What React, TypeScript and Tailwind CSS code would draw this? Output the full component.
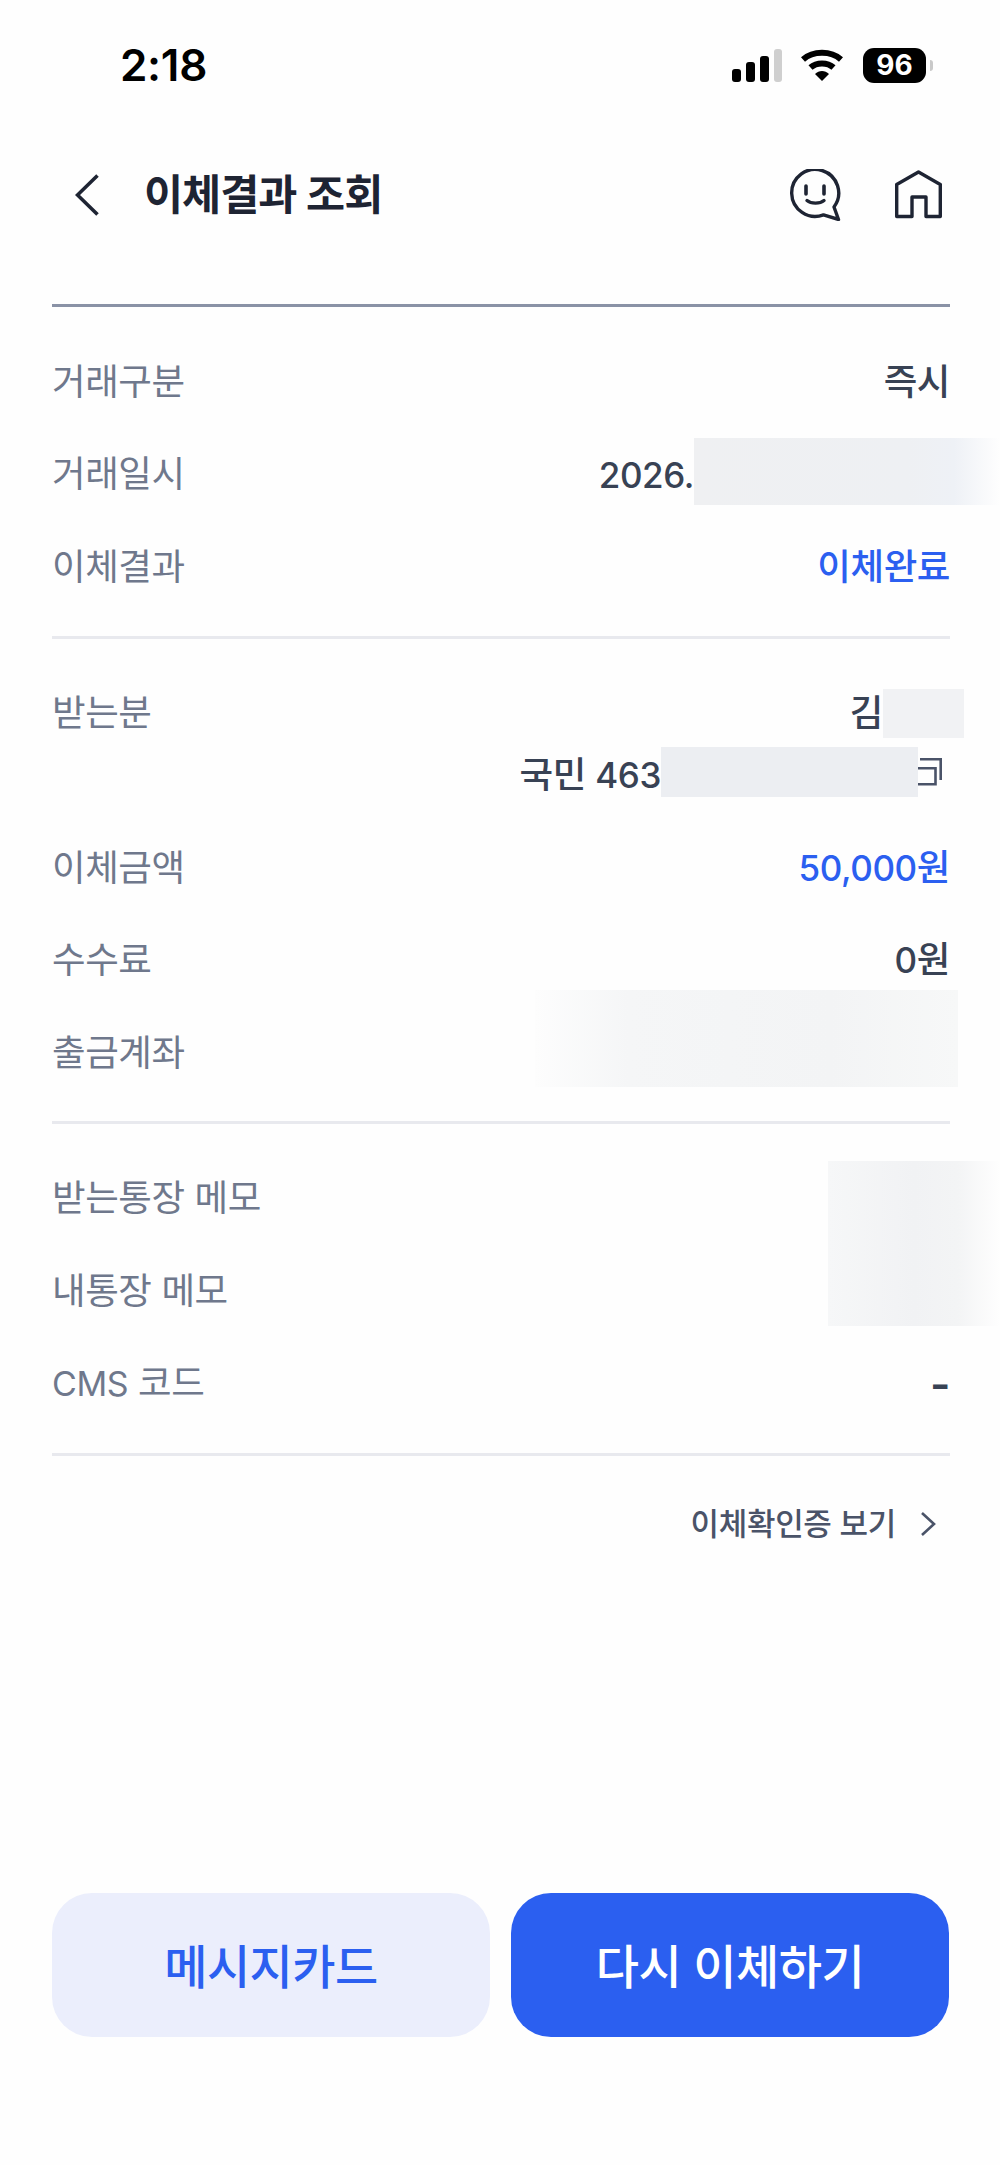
import * as React from "react";

const font = { fontFamily: 'Inter, "Noto Sans CJK KR", sans-serif' };

function Row({ label, children, className = "" }: { label: React.ReactNode; children?: React.ReactNode; className?: string }) {
  return (
    <div className={`flex h-[92.5px] items-center justify-between text-[36.5px] tracking-[-0.4px] ${className}`}>
      <span className="text-[#6f788c]">{label}</span>
      {children}
    </div>
  );
}

function Value({ children, blue }: { children: React.ReactNode; blue?: boolean }) {
  return <span className={`font-medium ${blue ? "text-[#2b5ff0]" : "text-[#384254]"}`}>{children}</span>;
}

function Divider() {
  return <div className="h-[3px] bg-[#e8e9ee]" />;
}

export default function App() {
  return (
    <div className="relative h-[2165px] w-[1000px] overflow-hidden bg-[#fefefe]" style={font}>
      {/* status bar */}
      <div className="flex h-[132px] items-center justify-between pb-[2px] pl-[120px] pr-[67px]">
        <span className="text-[44px] font-semibold tracking-[-0.3px] text-black">2:18</span>
        <div className="flex items-center">
          <svg width="50" height="33" viewBox="0 0 50 33">
            <rect x="0" y="20" width="9" height="13" rx="3" fill="#000" />
            <rect x="14" y="13" width="9" height="20" rx="3" fill="#000" />
            <rect x="28" y="7" width="9" height="26" rx="3" fill="#000" />
            <rect x="42" y="0" width="8" height="33" rx="3" fill="#cfcfcf" />
          </svg>
          <svg className="ml-[19px]" width="42" height="32" viewBox="0 0 42 32" fill="none" stroke="#000" strokeWidth="6">
            <path d="M2 10.500C12 1.500 30 1.500 40 10.500" />
            <path d="M9.500 18.500C15.500 13 26.500 13 32.500 18.500" />
            <path d="M21 32 14 25C18 21 24 21 28 25Z" fill="#000" stroke="none" />
          </svg>
          <div className="ml-[20px] flex h-[35px] w-[63px] items-center justify-center rounded-[11px] bg-black text-[28px] font-bold leading-none text-white">
            96
          </div>
          <div className="ml-[4px] h-[11px] w-[3px] rounded-r-full bg-[#c9c9c9]" />
        </div>
      </div>

      {/* header */}
      <div className="flex h-[126px] items-center pl-[75px] pr-[58px]">
        <svg width="24" height="42" viewBox="0 0 24 42" fill="none" stroke="#1e2433" strokeWidth="3.6">
          <path d="M22.500 1.500 2.500 21l20 19.500" />
        </svg>
        <span className="ml-[45px] text-[42.5px] font-semibold tracking-[-1px] text-[#1e2433]">이체결과 조회</span>
        <svg className="ml-auto" width="52" height="52" viewBox="0 0 52 52" fill="none" stroke="#1e2433" strokeWidth="3.4">
          <path d="M34.500 45.900A23.500 23.500 0 1 1 45 38L49.500 50.500Z" strokeLinejoin="round" />
          <path d="M17 17v8M35 17v8" strokeLinecap="round" strokeWidth="3.6" />
          <path d="M18 31.500c4 3.500 13 3.500 17 0" strokeLinecap="round" />
        </svg>
        <svg className="ml-[54px]" width="47" height="50" viewBox="0 0 47 50" fill="none" stroke="#1e2433" strokeWidth="3.4">
          <path d="M23.500 2 45.300 14.500V46.500H31V27H17V46.500H1.700V14.500Z" strokeLinejoin="round" />
        </svg>
      </div>

      {/* content */}
      <div className="pl-[52px] pr-[50px] pt-[46px]">
        <div className="h-[3px] bg-[#8a92a6]" />

        <div className="pb-[22px] pt-[29px]">
          <Row label="거래구분"><Value>즉시</Value></Row>
          <Row label="거래일시">
            <span className="pr-[256px] text-[35px] font-medium text-[#384254]">2026.</span>
          </Row>
          <Row label="이체결과"><Value blue>이체완료</Value></Row>
        </div>
        <Divider />

        <div className="pb-[21px] pt-[29px]">
          <Row label="받는분" className="h-[90px]">
            <span className="pr-[67px] font-medium text-[#384254]">김</span>
          </Row>
          <div className="-mt-[16px] flex h-[62px] items-center justify-end text-[36.5px] tracking-[-0.4px]">
            <span className="pr-[289px] font-medium text-[#384254]">
              국민 <span className="text-[35px]">463</span>
            </span>
          </div>
          <Row label="이체금액" className="mt-[16px]">
            <Value blue><span className="text-[35px]">50,000</span>원</Value>
          </Row>
          <Row label="수수료">
            <Value><span className="text-[35px]">0</span>원</Value>
          </Row>
          <Row label="출금계좌" />
        </div>
        <Divider />

        <div className="pb-[23px] pt-[29px]">
          <Row label="받는통장 메모" className="h-[91.5px]" />
          <Row label="내통장 메모" className="h-[91.5px]" />
          <Row label={<><span className="text-[34px]">CMS</span> 코드</>} className="h-[91.5px]">
            <span className="text-[44px] font-semibold text-[#384254]">-</span>
          </Row>
        </div>
        <Divider />

        <div className="flex h-[136px] items-center justify-end pr-[14px]">
          <span className="text-[31px] font-medium tracking-[-0.3px] text-[#4a5368]">이체확인증 보기</span>
          <svg className="ml-[24px]" width="16" height="26" viewBox="0 0 16 26" fill="none" stroke="#4a5368" strokeWidth="2.6">
            <path d="M2 2l12 11L2 24" />
          </svg>
        </div>
      </div>

      {/* buttons */}
      <div className="absolute left-[52px] top-[1893px] flex w-[897px] gap-[21px]">
        <button className="flex h-[144px] w-[438px] items-center justify-center rounded-[40px] bg-[#ebeefc] pt-[4px] text-[47px] font-medium tracking-[-0.5px] text-[#2b5ff0]">
          메시지카드
        </button>
        <button className="flex h-[144px] w-[438px] items-center justify-center rounded-[40px] bg-[#2b5ff0] pt-[4px] text-[47px] font-medium tracking-[-0.5px] text-white">
          다시 이체하기
        </button>
      </div>

      {/* masked regions */}
      <div className="absolute left-[694px] top-[438px] h-[67px] w-[306px] bg-[linear-gradient(90deg,#eff0f2_0%,#eef0f3_70%,#eef1f6_85%,#fefefe_100%)]" />
      <div className="absolute left-[883px] top-[689px] h-[49px] w-[81px] bg-[#f1f2f4]" />
      <svg className="absolute left-[917px] top-[758px]" width="25" height="28" viewBox="0 0 25 28" fill="none" stroke="#4a5368" strokeWidth="2.6">
        <path d="M3 1.300h20.700v20.700" />
        <path d="M0 10.300h18.500v16H0" />
      </svg>
      <div className="absolute left-[661px] top-[747px] h-[50px] w-[257px] bg-[#eceef2]" />
      <div className="absolute left-[535px] top-[990px] h-[97px] w-[423px] bg-[linear-gradient(90deg,#fdfdfd_0%,#f5f6f7_22%,#f3f4f5_70%,#f7f8f8_100%)]" />
      <div className="absolute left-[828px] top-[1161px] h-[165px] w-[172px] bg-[linear-gradient(90deg,#f6f7f8_0%,#f1f2f4_50%,#f3f4f5_75%,#fefefe_100%)]" />
    </div>
  );
}
